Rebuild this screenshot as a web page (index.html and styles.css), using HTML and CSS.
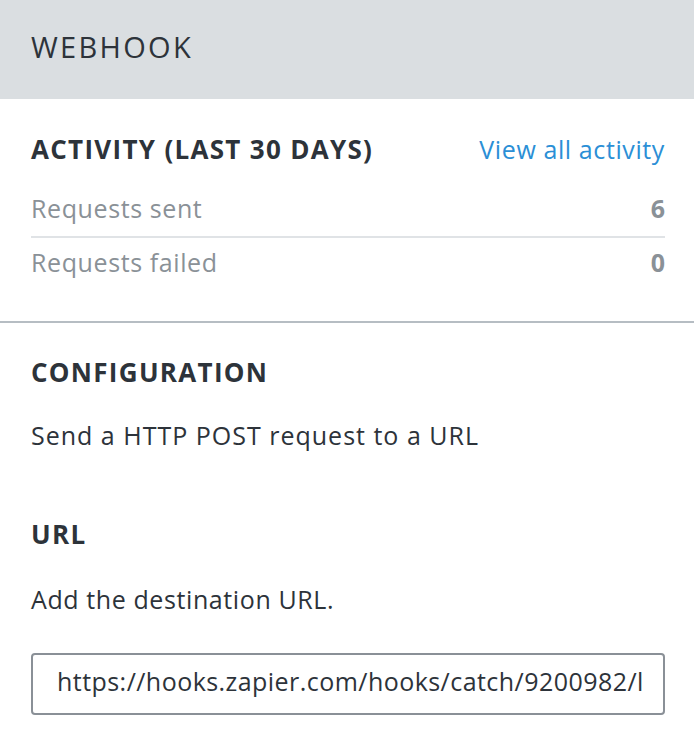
FILE: index.html
```html
<!DOCTYPE html>
<html lang="en">
<head>
<meta charset="utf-8">
<title>Webhook</title>
<link rel="stylesheet" href="styles.css">
</head>
<body>
<div class="panel">
  <header class="panel-header">
    <h1 class="panel-title">WEBHOOK</h1>
  </header>
  <section class="activity">
    <div class="activity-head">
      <h2 class="section-title">ACTIVITY (LAST 30 DAYS)</h2>
      <a class="link" href="#">View all activity</a>
    </div>
    <div class="stat-row">
      <span class="stat-label">Requests sent</span>
      <span class="stat-value">6</span>
    </div>
    <div class="stat-row">
      <span class="stat-label">Requests failed</span>
      <span class="stat-value">0</span>
    </div>
  </section>
  <section class="config">
    <h2 class="section-title">CONFIGURATION</h2>
    <p class="text config-desc">Send a HTTP POST request to a URL</p>
    <h2 class="section-title url-title">URL</h2>
    <p class="text url-desc">Add the destination URL.</p>
    <div class="input">https://hooks.zapier.com/hooks/catch/9200982/l</div>
  </section>
</div>
</body>
</html>
```

FILE: styles.css
```css
* { box-sizing: border-box; }
html, body { margin: 0; padding: 0; background: #ffffff; }
body {
  font-family: "Open Sans", "Liberation Sans", sans-serif;
  color: #2d333a;
  width: 694px;
  height: 756px;
  overflow: hidden;
}
.panel-header {
  height: 99px;
  background: #dadee1;
  padding: 29px 31px 0;
}
.panel-title {
  margin: 0;
  font-size: 29px;
  font-weight: 400;
  letter-spacing: 2.3px;
  line-height: 36px;
  color: #2d333a;
}
.activity {
  padding: 35px 29px 44px 31px;
  border-bottom: 2px solid #b6bdc3;
}
.activity-head {
  display: flex;
  justify-content: space-between;
  align-items: baseline;
  margin-bottom: 29px;
}
.section-title {
  margin: 0;
  font-size: 26px;
  font-weight: 700;
  line-height: 30px;
  letter-spacing: 1.3px;
  color: #2d333a;
}
.link {
  font-size: 25px;
  line-height: 30px;
  letter-spacing: 0.6px;
  color: #2b8fd6;
  text-decoration: none;
}
.stat-row {
  display: flex;
  justify-content: space-between;
  align-items: baseline;
  font-size: 25px;
  line-height: 30px;
  letter-spacing: 0.6px;
  color: #8a9197;
  padding-bottom: 13px;
}
.stat-row + .stat-row {
  border-top: 2px solid #e0e3e6;
  padding-top: 9px;
  padding-bottom: 0;
}
.stat-value { font-weight: 700; letter-spacing: 0; }
.config {
  padding: 34px 29px 0 31px;
}
.text {
  margin: 0;
  font-size: 25px;
  line-height: 30px;
  letter-spacing: 0.6px;
  color: #2d333a;
}
.config-desc { margin-top: 33px; letter-spacing: 1px; }
.url-title { margin-top: 69px; }
.url-desc { margin-top: 35px; }
.input {
  margin-top: 39px;
  height: 62px;
  border: 2px solid #8a9097;
  border-radius: 4px;
  padding: 11px 0 0 24px;
  font-size: 25px;
  line-height: 30px;
  letter-spacing: 0.45px;
  color: #2d333a;
  white-space: nowrap;
  overflow: hidden;
}
```
